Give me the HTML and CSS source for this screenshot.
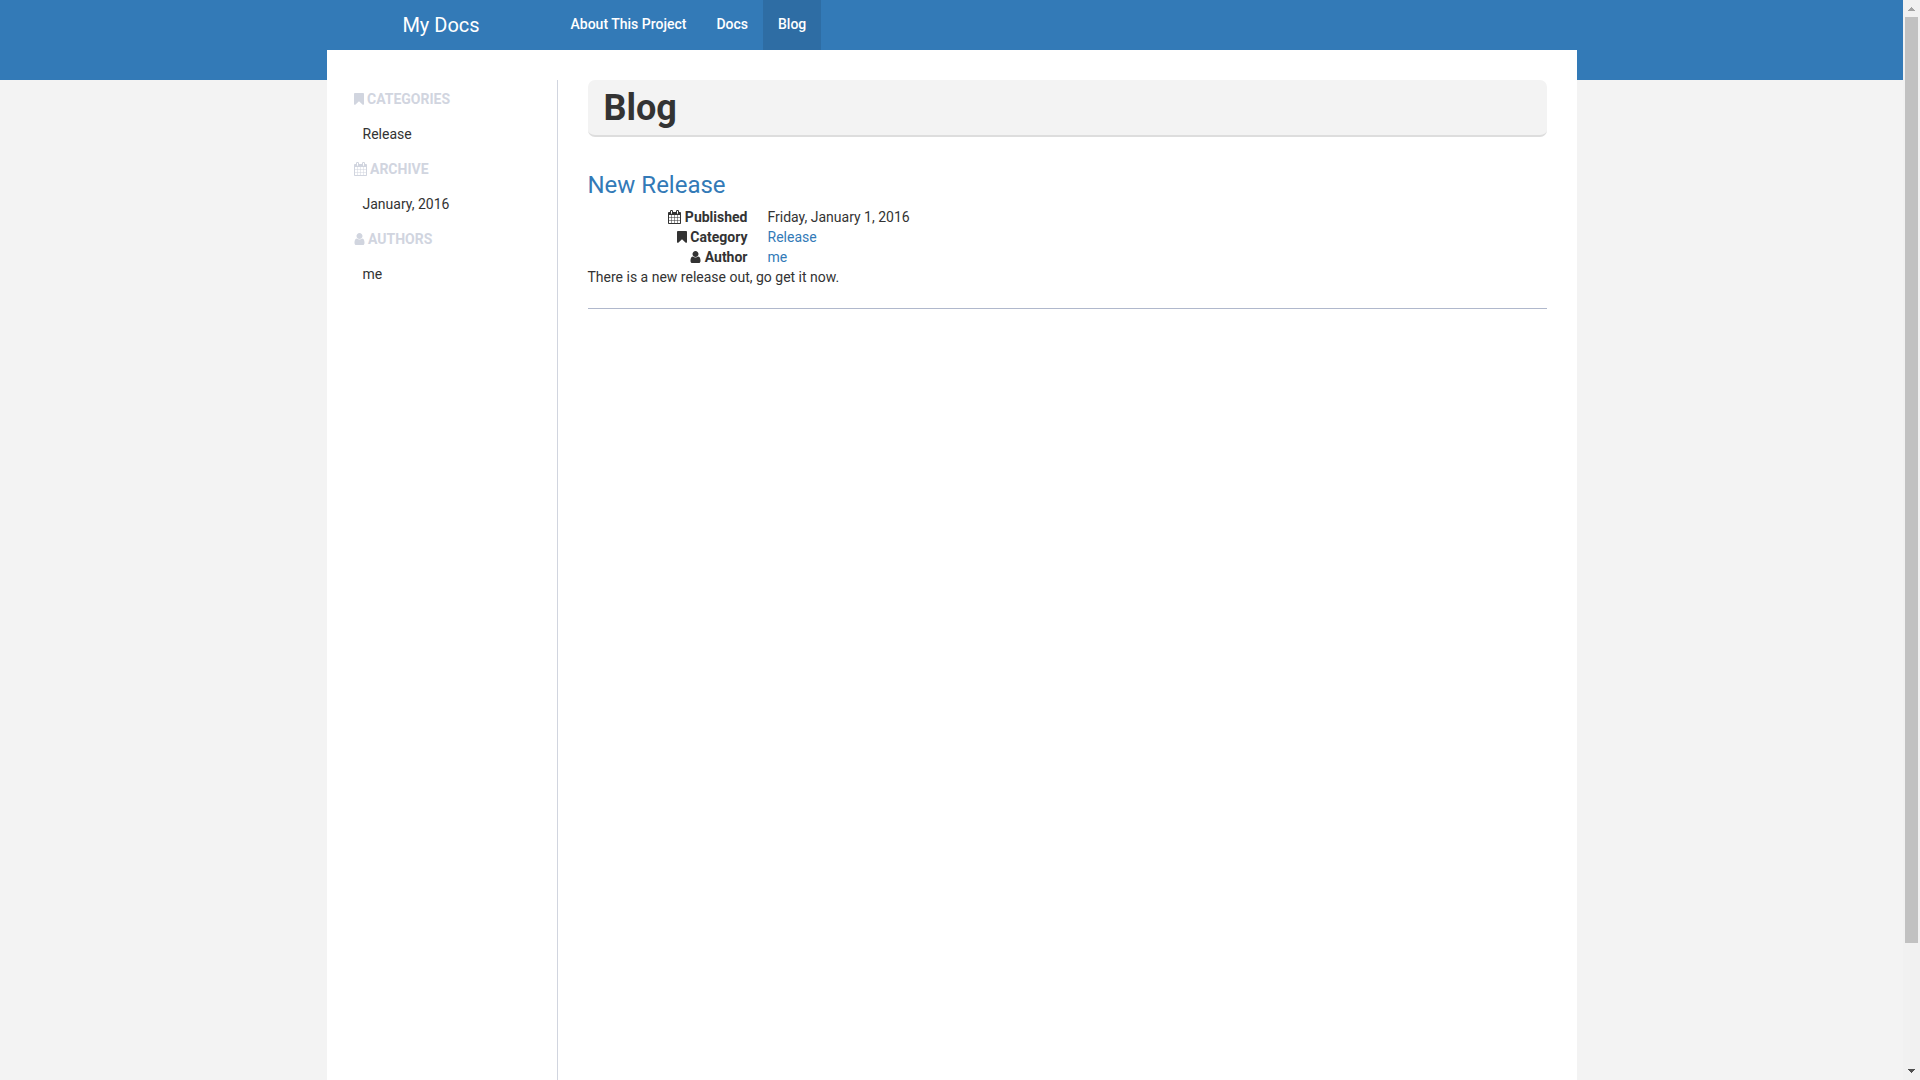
FILE: index.html
```html
<!DOCTYPE html>
<html lang="en">
<head>
<meta charset="utf-8">
<title>Blog - My Docs</title>
<link rel="stylesheet" href="styles.css">
</head>
<body>
<svg class="sprite" aria-hidden="true">
  <symbol id="bookmark" viewBox="0 0 1280 1792"><path d="M1164 128q23 0 44 9 33 13 52.500 41t19.500 62v1289q0 34-19.500 62t-52.500 41q-19 8-44 8-48 0-83-32l-441-424-441 424q-36 33-83 33-23 0-44-9-33-13-52.500-41t-19.500-62v-1289q0-34 19.500-62t52.500-41q21-9 44-9h1048z"/></symbol>
  <symbol id="user" viewBox="0 0 1280 1792"><path d="M1280 1399q0 109-62.500 187t-150.500 78h-854q-88 0-150.500-78t-62.500-187q0-85 8.500-160.500t31.500-152 58.500-131 94-89 134.500-34.500q131 128 313 128t313-128q76 0 134.500 34.500t94 89 58.500 131 31.500 152 8.500 160.500zm-256-887q0 159-112.500 271.500t-271.500 112.500-271.500-112.500-112.500-271.500 112.500-271.500 271.500-112.500 271.500 112.500 112.500 271.500z"/></symbol>
  <symbol id="calendar" viewBox="0 0 1664 1792"><path d="M128 1664h288v-288h-288v288zm352 0h320v-288h-320v288zm-352-352h288v-320h-288v320zm352 0h320v-320h-320v320zm-352-384h288v-288h-288v288zm736 736h320v-288h-320v288zm-384-736h320v-288h-320v288zm768 736h288v-288h-288v288zm-384-352h320v-320h-320v320zm-352-864v-288q0-13-9.500-22.500t-22.500-9.500h-64q-13 0-22.500 9.500t-9.500 22.500v288q0 13 9.500 22.500t22.500 9.500h64q13 0 22.500-9.500t9.500-22.500zm736 864h288v-320h-288v320zm-384-384h320v-288h-320v288zm384 0h288v-288h-288v288zm32-480v-288q0-13-9.500-22.500t-22.500-9.500h-64q-13 0-22.500 9.500t-9.500 22.500v288q0 13 9.500 22.500t22.500 9.500h64q13 0 22.500-9.500t9.500-22.500zm384-64v1280q0 52-38 90t-90 38h-1408q-52 0-90-38t-38-90v-1280q0-52 38-90t90-38h128v-96q0-66 47-113t113-47h64q66 0 113 47t47 113v96h384v-96q0-66 47-113t113-47h64q66 0 113 47t47 113v96h128q52 0 90 38t38 90z"/></symbol>
</svg>
<div class="page">
  <header class="navbar">
    <a class="brand" href="#">My Docs</a>
    <nav class="menu">
      <a href="#">About This Project</a>
      <a href="#">Docs</a>
      <a class="active" href="#" aria-current="page">Blog</a>
    </nav>
  </header>
  <div class="body">
    <aside class="sidebar">
      <h2><svg class="icon"><use href="#bookmark"/></svg> CATEGORIES</h2>
      <a href="#">Release</a>
      <h2><svg class="icon wide"><use href="#calendar"/></svg> ARCHIVE</h2>
      <a href="#">January, 2016</a>
      <h2><svg class="icon user"><use href="#user"/></svg> AUTHORS</h2>
      <a href="#">me</a>
    </aside>
    <main class="content">
      <h1>Blog</h1>
      <article>
        <h2><a href="#">New Release</a></h2>
        <dl>
          <dt><svg class="icon wide"><use href="#calendar"/></svg> Published</dt>
          <dd>Friday, January 1, 2016</dd>
          <dt><svg class="icon"><use href="#bookmark"/></svg> Category</dt>
          <dd><a href="#">Release</a></dd>
          <dt><svg class="icon user"><use href="#user"/></svg> Author</dt>
          <dd><a href="#">me</a></dd>
        </dl>
        <p>There is a new release out, go get it now.</p>
      </article>
      <hr>
    </main>
  </div>
</div>
<div class="scrollbar" aria-hidden="true">
  <svg viewBox="0 0 17 17"><path fill="#a3a3a3" d="M8 7h1v1h1v1h1v1h1v1H5v-1h1V9h1V8h1z"/></svg>
  <div class="track"><div class="thumb"></div></div>
  <svg viewBox="0 0 17 17"><path fill="#505050" d="M5 6h7v1h-1v1h-1v1H9v1H8V9H7V8H6V7H5z"/></svg>
</div>
</body>
</html>
```
FILE: styles.css
```css
* { box-sizing: border-box; }

body {
  display: grid;
  grid-template-columns: 1fr 17px;
  min-height: 100vh;
  margin: 0;
  background: #f3f3f3 linear-gradient(#337ab7, #337ab7) 0 0 / 100% 80px no-repeat;
  color: #333;
  font: 14px/20px Roboto, "Liberation Sans", sans-serif;
}

h1, h2, dl, dd, p { margin: 0; }
a { color: #337ab7; text-decoration: none; }

.sprite { position: absolute; width: 0; height: 0; }

.icon {
  width: 10px;
  height: 14px;
  vertical-align: -2px;
  fill: currentColor;
}
.icon.wide { width: 13px; }
.icon.user { width: 11px; }

.page {
  display: flex;
  flex-direction: column;
  width: 100%;
  max-width: 1250px;
  margin: 0 auto;
}

.navbar { display: grid; grid-template-columns: 229px 1fr; }
.navbar a { padding: 15px; color: #fff; }
.brand { justify-self: center; font-size: 20px; }
.menu { display: flex; font-weight: 500; }
.navbar .menu a { padding: 14px 15px 16px; }
.menu .active { background: #2e6da4; }

.body {
  display: grid;
  grid-template-columns: 231px 1fr;
  flex: 1;
  padding-top: 30px;
  background: #fff;
}

.sidebar {
  display: flex;
  flex-direction: column;
  gap: 15px;
  padding: 9px 27px;
  border-right: 1px solid #d1d5df;
}
.sidebar h2 { color: #d1d5df; font-size: 14px; line-height: 20px; font-weight: 700; }
.sidebar a { padding-left: 9px; color: #333; }

.content { padding: 0 30px; }
.content h1 {
  padding: 2px 16px 0;
  border-bottom: 2px solid #ddd;
  border-radius: 7px;
  background: #f3f3f3;
  font-size: 36px;
  line-height: 53px;
}
.content h2 { margin: 33px 0 7px; font-size: 24px; line-height: 30px; font-weight: 400; }

dl { display: grid; grid-template-columns: 160px 1fr; column-gap: 20px; }
dt { text-align: right; font-weight: 700; }

hr { height: 1px; margin: 21px 0; border: 0; background: #b0b8cc; }

.scrollbar {
  position: sticky;
  top: 0;
  display: flex;
  flex-direction: column;
  height: 100vh;
  background: #f1f1f1;
}
.scrollbar svg { width: 17px; height: 17px; }
.track { flex: 1; padding: 0 2px; }
.thumb { height: 88.5%; background: #c1c1c1; }
```
